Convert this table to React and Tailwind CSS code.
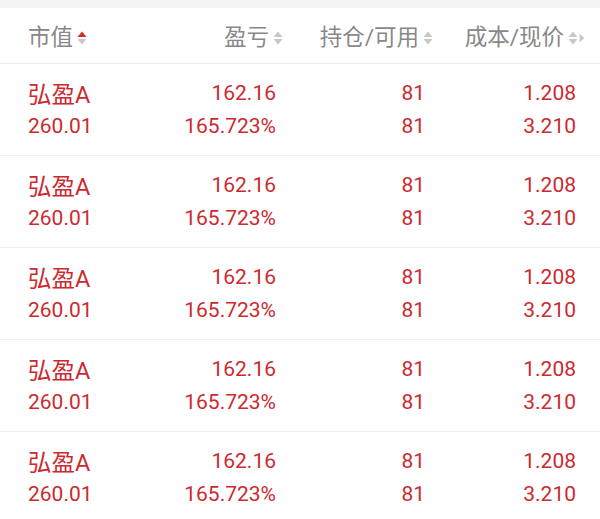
import React from 'react'

const rows = Array.from({ length: 5 }, () => ({
  name: '弘盈A',
  value: '260.01',
  pnl: '162.16',
  pnlPct: '165.723%',
  hold: '81',
  avail: '81',
  cost: '1.208',
  price: '3.210',
}))

const SortIcon = ({ active = false }) => (
  <svg width="10" height="16" viewBox="0 0 10 16" className="ml-[4px]">
    <path d="M5 1.5 L9.5 7 L0.5 7 Z" fill={active ? '#d42b2b' : '#c8c8c8'} />
    <path d="M5 14.5 L9.5 9 L0.5 9 Z" fill="#c8c8c8" />
  </svg>
)

const App = () => {
  return (
    <div
      className="w-[600px] h-[519px] overflow-hidden bg-white"
      style={{ fontFamily: "Roboto, 'Noto Sans CJK SC', sans-serif" }}
    >
      <div className="h-[8px] bg-[#f4f4f4]" />

      {/* header */}
      <div className="flex items-center h-[56px] pt-[4px] border-b border-[#eeeeee] text-[22.5px] text-[#888888] pl-[28px]">
        <div className="w-[150px] flex items-center">
          <span>市值</span>
          <SortIcon active />
        </div>
        <div className="w-[105px] flex items-center justify-end">
          <span>盈亏</span>
          <SortIcon />
        </div>
        <div className="w-[150px] flex items-center justify-end">
          <span>持仓/可用</span>
          <SortIcon />
        </div>
        <div className="w-[152px] flex items-center justify-end">
          <span>成本/现价</span>
          <SortIcon />
          <svg width="6" height="12" viewBox="0 0 6 12" className="ml-[1px]">
            <path d="M0.5 1.5 L5.5 6 L0.5 10.5 Z" fill="#c8c8c8" />
          </svg>
        </div>
      </div>

      {rows.map((r, i) => (
        <div
          key={i}
          className="flex h-[92px] pt-[13px] pl-[28px] border-b border-[#f0f0f0] text-[21px] leading-[33px] text-[#cc2a30]"
        >
          <div className="w-[150px] flex flex-col">
            <span className="text-[23.5px] translate-y-[2px]">{r.name}</span>
            <span>{r.value}</span>
          </div>
          <div className="w-[105px] flex flex-col items-end pr-[7px]">
            <span>{r.pnl}</span>
            <span>{r.pnlPct}</span>
          </div>
          <div className="w-[150px] flex flex-col items-end pr-[8px]">
            <span>{r.hold}</span>
            <span>{r.avail}</span>
          </div>
          <div className="w-[143px] flex flex-col items-end">
            <span>{r.cost}</span>
            <span>{r.price}</span>
          </div>
        </div>
      ))}
    </div>
  )
}

export default App
